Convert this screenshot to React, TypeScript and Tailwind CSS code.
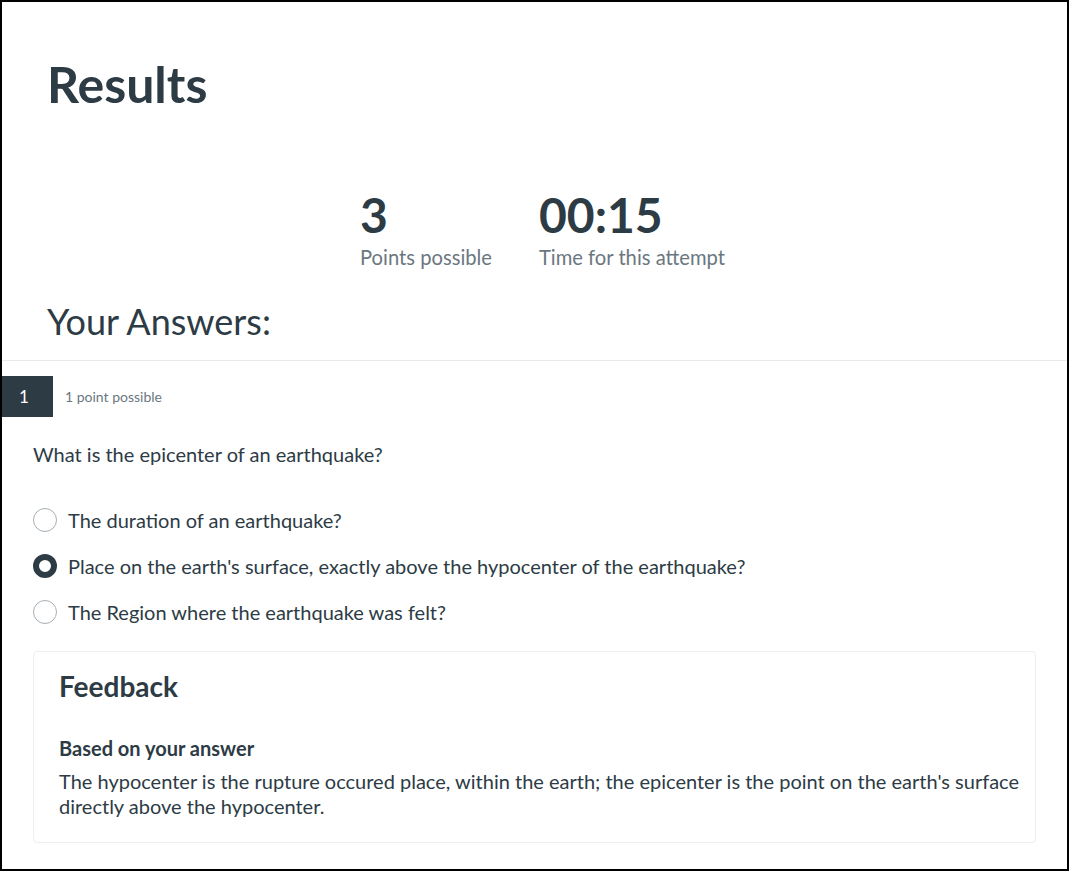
import { useState } from "react";

const options = [
  "The duration of an earthquake?",
  "Place on the earth's surface, exactly above the hypocenter of the earthquake?",
  "The Region where the earthquake was felt?",
];

function Radio({ checked }: { checked: boolean }) {
  return checked ? (
    <span className="box-border inline-block h-[24px] w-[24px] shrink-0 rounded-full border-[6px] border-[#2d3b45] bg-white" />
  ) : (
    <span className="box-border inline-block h-[24px] w-[24px] shrink-0 rounded-full border border-[#a5afb5] bg-white" />
  );
}

export default function App() {
  const [selected] = useState(1);

  return (
    <div
      className="h-[871px] w-[1069px] overflow-hidden border-2 border-black bg-white text-[#2d3b45]"
      style={{ fontFamily: "Lato, 'Open Sans', sans-serif" }}
    >
      <div className="px-[45px] pt-[52px]">
        <h1 className="text-[50px] font-bold leading-[60px]">Results</h1>

        <div className="mt-[72px] flex gap-[47px] pl-[313px]">
          <div>
            <div className="text-[48px] font-bold leading-[57px]">3</div>
            <div className="mt-[2px] text-[20.2px] leading-[24px] text-[#6b7780]">Points possible</div>
          </div>
          <div>
            <div className="text-[48px] font-bold leading-[57px]">00:15</div>
            <div className="mt-[2px] text-[20.2px] leading-[24px] text-[#6b7780]">Time for this attempt</div>
          </div>
        </div>

        <h2 className="mt-[31px] mb-[17px] text-[36px] leading-[43px]">Your Answers:</h2>
      </div>

      <div className="border-t border-[#e8eaec]">
        <div className="mt-[15px] flex items-center gap-[12px]">
          <div className="flex h-[41px] w-[51px] items-center bg-[#2d3b45] pl-[17px] text-[17px] text-white">
            1
          </div>
          <span className="text-[14px] text-[#6b7780]">1 point possible</span>
        </div>

        <div className="px-[31px]">
          <p className="mt-[25px] text-[20px] leading-[24px]">What is the epicenter of an earthquake?</p>

          <div className="mt-[42px] flex flex-col gap-[22px]">
            {options.map((o, i) => (
              <label key={o} className="flex items-center gap-[11px] text-[20px] leading-[24px]">
                <Radio checked={i === selected} />
                <span>{o}</span>
              </label>
            ))}
          </div>

          <div className="mt-[27px] rounded-[4px] border border-[#eceeef] pl-[25px] pr-[12px] pt-[17px] pb-[23px]">
            <h3 className="text-[28px] font-bold leading-[34px]">Feedback</h3>
            <p className="mt-[33px] text-[20px] font-bold leading-[24px]">Based on your answer</p>
            <p className="mt-[9px] text-[20px] leading-[25px]">
              The hypocenter is the rupture occured place, within the earth; the epicenter is the point on the earth's surface
              directly above the hypocenter.
            </p>
          </div>
        </div>
      </div>
    </div>
  );
}
